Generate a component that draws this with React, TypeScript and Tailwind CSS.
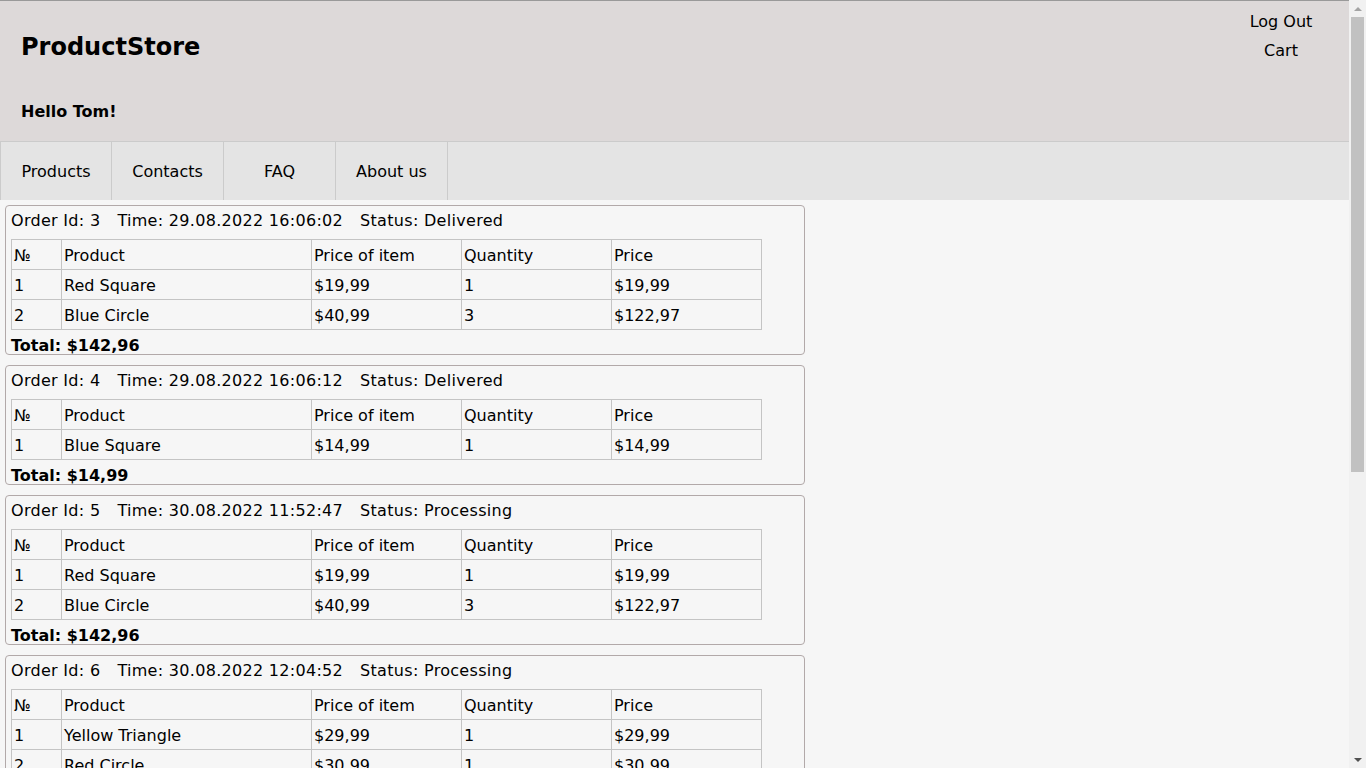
import React from 'react';

type Item = { name: string; price: string; qty: number; total: string };
type Order = { id: number; time: string; status: string; items: Item[]; total: string };

const orders: Order[] = [
  {
    id: 3,
    time: '29.08.2022 16:06:02',
    status: 'Delivered',
    items: [
      { name: 'Red Square', price: '$19,99', qty: 1, total: '$19,99' },
      { name: 'Blue Circle', price: '$40,99', qty: 3, total: '$122,97' },
    ],
    total: '$142,96',
  },
  {
    id: 4,
    time: '29.08.2022 16:06:12',
    status: 'Delivered',
    items: [{ name: 'Blue Square', price: '$14,99', qty: 1, total: '$14,99' }],
    total: '$14,99',
  },
  {
    id: 5,
    time: '30.08.2022 11:52:47',
    status: 'Processing',
    items: [
      { name: 'Red Square', price: '$19,99', qty: 1, total: '$19,99' },
      { name: 'Blue Circle', price: '$40,99', qty: 3, total: '$122,97' },
    ],
    total: '$142,96',
  },
  {
    id: 6,
    time: '30.08.2022 12:04:52',
    status: 'Processing',
    items: [
      { name: 'Yellow Triangle', price: '$29,99', qty: 1, total: '$29,99' },
      { name: 'Red Circle', price: '$30,99', qty: 1, total: '$30,99' },
    ],
    total: '$60,98',
  },
];

const cell = 'border border-[#c4c4c4] px-[2px] pt-[2px] h-[30px] text-left font-normal align-middle';

function OrderCard({ order }: { order: Order }) {
  return (
    <div className="w-[800px] rounded-[4px] border border-[#b2a9a9] px-[5px] pt-[5px] mb-[10px]">
      <div className="h-[20px] leading-[20px] flex tracking-[0.3px]">
        <span className="mr-[17px]">Order Id: {order.id}</span>
        <span className="mr-[17px]">Time: {order.time}</span>
        <span>Status: {order.status}</span>
      </div>
      <table className="mt-[8px] border-collapse">
        <thead>
          <tr>
            <th className={`${cell} w-[50px]`}>№</th>
            <th className={`${cell} w-[250px]`}>Product</th>
            <th className={`${cell} w-[150px]`}>Price of item</th>
            <th className={`${cell} w-[150px]`}>Quantity</th>
            <th className={`${cell} w-[150px]`}>Price</th>
          </tr>
        </thead>
        <tbody>
          {order.items.map((it, i) => (
            <tr key={i}>
              <td className={cell}>{i + 1}</td>
              <td className={cell}>{it.name}</td>
              <td className={cell}>{it.price}</td>
              <td className={cell}>{it.qty}</td>
              <td className={cell}>{it.total}</td>
            </tr>
          ))}
        </tbody>
      </table>
      <div className="mt-[7px] h-[17px] leading-[17px] font-bold">Total: {order.total}</div>
    </div>
  );
}

function Scrollbar() {
  return (
    <div className="fixed right-0 top-0 w-[17px] h-screen bg-[#f1f1f1] flex flex-col items-center">
      <div className="h-[17px] flex items-center justify-center">
        <div className="w-0 h-0 border-x-[4px] border-x-transparent border-b-[4px] border-b-[#a3a3a3]" />
      </div>
      <div className="w-[13px] h-[455px] bg-[#c1c1c1]" />
      <div className="flex-1" />
      <div className="h-[17px] flex items-center justify-center">
        <div className="w-0 h-0 border-x-[4px] border-x-transparent border-t-[4px] border-t-[#505050]" />
      </div>
    </div>
  );
}

export default function App() {
  return (
    <div className="min-h-screen bg-[#f6f6f6] text-[16px] text-black font-['DejaVu_Sans',Verdana,sans-serif] pr-[17px]">
      <header className="border-t border-[#999] bg-[#ddd9d9] h-[141px] flex justify-between">
        <div className="pl-[21px]">
          <h1 className="text-[24px] font-bold leading-[30px] mt-[31px]">ProductStore</h1>
          <p className="font-bold leading-[20px] mt-[40px]">Hello Tom!</p>
        </div>
        <div className="w-[100px] mr-[18px] text-center leading-[29px] pt-[6px]">
          <div>Log Out</div>
          <div>Cart</div>
        </div>
      </header>
      <nav className="flex h-[59px] bg-[#e4e4e4] border-t border-[#cbcbcb]">
        {['Products', 'Contacts', 'FAQ', 'About us'].map((n, i) => (
          <div
            key={n}
            className={`w-[112px] pt-[2px] flex items-center justify-center border-r border-[#cbcbcb] ${i === 0 ? 'border-l' : ''}`}
          >
            {n}
          </div>
        ))}
      </nav>
      <main className="pt-[5px] pl-[5px]">
        {orders.map((o) => (
          <OrderCard key={o.id} order={o} />
        ))}
      </main>
      <Scrollbar />
    </div>
  );
}
